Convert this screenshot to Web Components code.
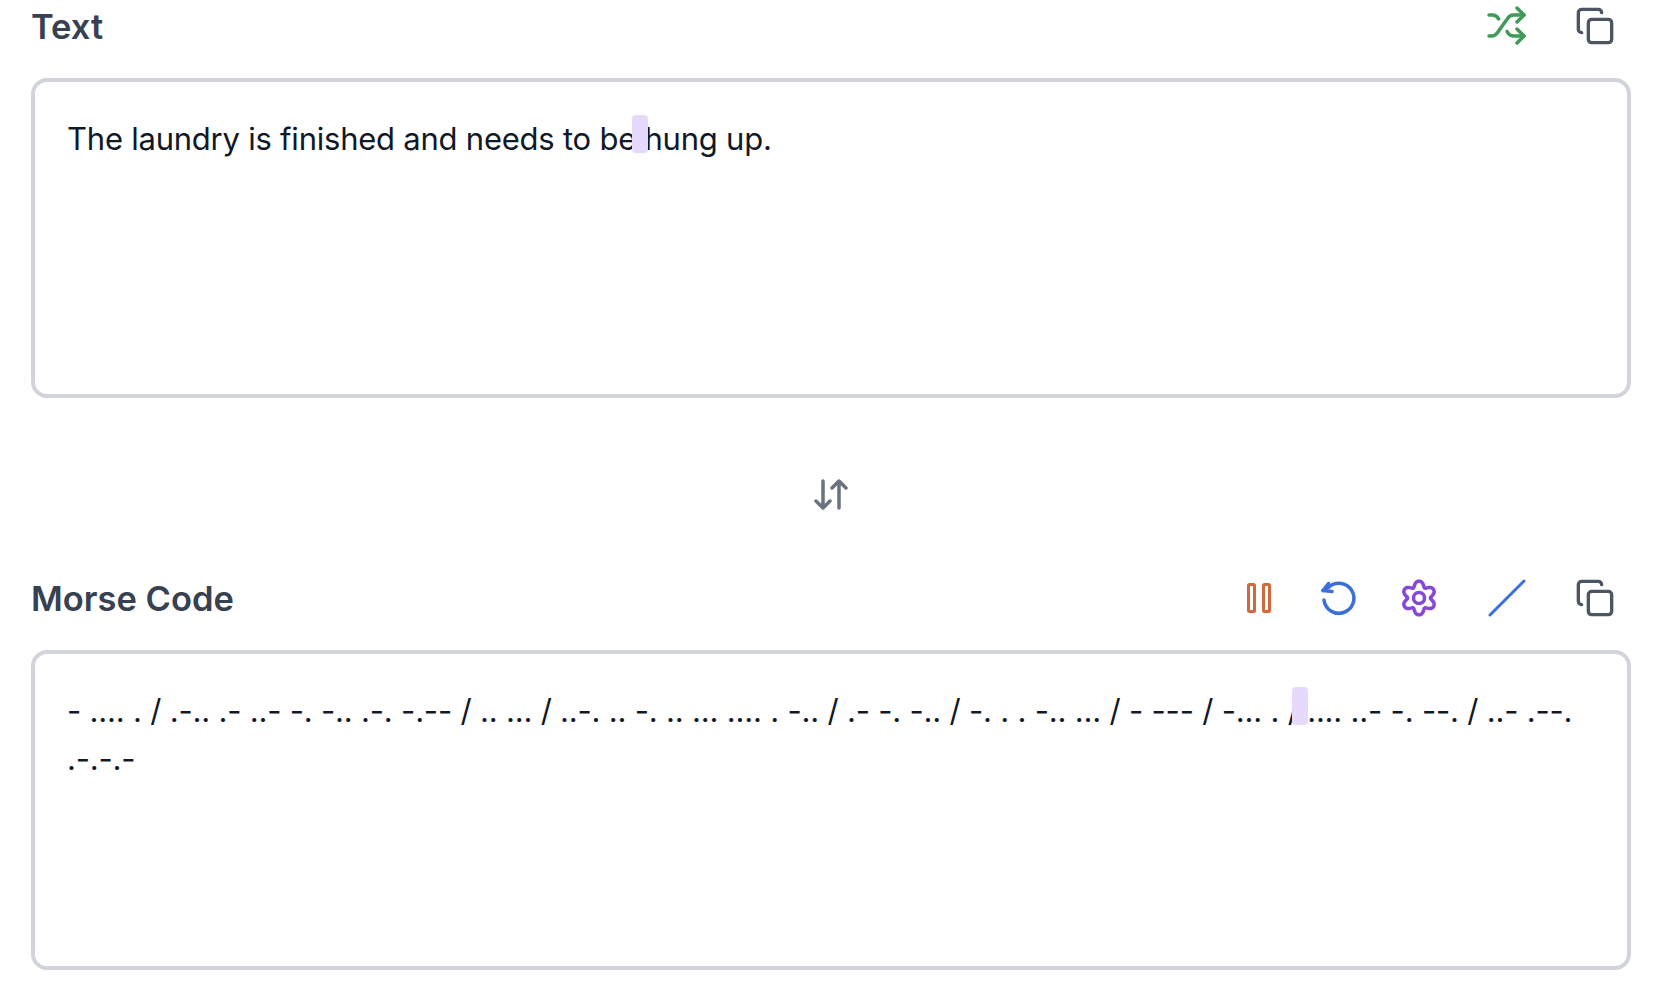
<!DOCTYPE html>
<html>
<head>
<meta charset="utf-8">
<style>
  html, body { margin: 0; background: #fff; }
  body { font-family: Inter, "Liberation Sans", sans-serif; overflow: hidden; }
</style>
</head>
<body>
<translator-page>
  <code-panel label="Text">
    <tool-icon slot="tools" name="shuffle" color="#3f9b57"></tool-icon>
    <tool-icon slot="tools" name="copy" color="#4b5563" wide></tool-icon>
    The laundry is finished and needs to be<cursor-mark></cursor-mark> hung up.
  </code-panel>
  <swap-divider></swap-divider>
  <code-panel label="Morse Code" style="--track: -0.205px; --cursor-left: -7px">
    <tool-icon slot="tools" name="pause" color="#d2693a"></tool-icon>
    <tool-icon slot="tools" name="rotate" color="#3b6fd9"></tool-icon>
    <tool-icon slot="tools" name="gear" color="#8747d8"></tool-icon>
    <tool-icon slot="tools" name="slash" color="#3b6fd9" wide></tool-icon>
    <tool-icon slot="tools" name="copy" color="#4b5563" wide></tool-icon>
    - .... . / .-.. .- ..- -. -.. .-. -.-- / .. ... / ..-. .. -. .. ... .... . -.. / .- -. -.. / -. . . -.. ... / - --- / -... . /<cursor-mark></cursor-mark> .... ..- -. --. / ..- .--. .-.-.-
  </code-panel>
</translator-page>

<script>
  // six lobed gear outline, centre line of the stroke
  function gearPath() {
    let d = '';
    for (let i = 0; i <= 120; i++) {
      const a = i / 120 * Math.PI * 2;
      const r = 14.5 + 2.7 * Math.cos(6 * a) - 0.4 * Math.cos(12 * a);
      const x = 24 + r * Math.sin(a);
      const y = 24 - r * Math.cos(a);
      d += (i ? 'L' : 'M') + x.toFixed(2) + ' ' + y.toFixed(2);
    }
    return d + 'Z';
  }

  const ICONS = {
    shuffle: '<g transform="translate(2.500 2.500) scale(1.75)"><path d="M2 18h1.400c1.300 0 2.500-.6 3.300-1.700l6.100-8.600c.7-1.100 2-1.700 3.300-1.700H22"/><path d="m18 2 4 4-4 4"/><path d="M2 6h1.900c1.500 0 2.900.9 3.600 2.200"/><path d="M22 18h-5.900c-1.300 0-2.600-.7-3.300-1.800l-.5-.8"/><path d="m18 14 4 4-4 4"/></g>',
    copy: '<g transform="translate(4 4) scale(1.667)"><rect x="8" y="8" width="14" height="14" rx="2"/><path d="M4 16c-1.100 0-2-.9-2-2V4c0-1.100.9-2 2-2h10c1.100 0 2 .9 2 2"/></g>',
    pause: '<rect x="13.500" y="10.500" width="6" height="27" rx="1"/><rect x="28.500" y="10.500" width="6" height="27" rx="1"/>',
    rotate: '<path d="M9 26a15 15 0 1 0 5-13L8 16.500"/><path d="M13.500 9.500L8 16.500l9 1"/>',
    gear: '<path d="' + gearPath() + '"/><circle cx="24" cy="24" r="5.500"/>',
    slash: '<path d="M7 41L41 7"/>',
    swap: '<path d="M16 11v27M9 31l7 7 7-7M32 38V11M25 18l7-7 7 7"/>'
  };

  class ToolIcon extends HTMLElement {
    connectedCallback() {
      const name = this.getAttribute('name');
      this.attachShadow({ mode: 'open' });
      this.shadowRoot.innerHTML = `
        <style>
          :host {
            display: block;
            width: 48px;
            height: 48px;
            color: ${this.getAttribute('color') || '#6b7280'};
          }
          :host([wide]) { margin-left: 8px; }
          svg { display: block; }
        </style>
        <svg width="48" height="48" viewBox="0 0 48 48" fill="none" stroke="currentColor"
          stroke-width="${name === 'shuffle' || name === 'copy' ? 2 : name === 'gear' || name === 'rotate' ? 3.5 : 3}" stroke-linecap="round" stroke-linejoin="round">${ICONS[name]}</svg>
      `;
    }
  }
  customElements.define('tool-icon', ToolIcon);

  class CursorMark extends HTMLElement {
    connectedCallback() {
      this.attachShadow({ mode: 'open' });
      this.shadowRoot.innerHTML = `
        <style>
          :host {
            position: relative;
            display: inline-block;
            width: 0;
            height: 0;
          }
          div {
            position: absolute;
            left: var(--cursor-left, -4px);
            top: -35px;
            width: 16px;
            height: 38px;
            border-radius: 4px;
            background: #e6d9fc;
          }
        </style>
        <div></div>
      `;
    }
  }
  customElements.define('cursor-mark', CursorMark);

  class CodePanel extends HTMLElement {
    connectedCallback() {
      this.attachShadow({ mode: 'open' });
      this.shadowRoot.innerHTML = `
        <style>
          :host { display: block; }
          header {
            display: flex;
            justify-content: space-between;
            align-items: center;
            height: 52px;
            margin-bottom: 26px;
            padding-right: 12px;
          }
          h2 {
            margin: 0;
            font-size: 34.500px;
            font-weight: 600;
            color: #374151;
          }
          .tools {
            display: flex;
            gap: 32px;
          }
          .box {
            box-sizing: border-box;
            height: 320px;
            border: 4px solid #d1d5db;
            border-radius: 16px;
            padding: 33px 32px 32px;
            font-size: 31px;
            letter-spacing: var(--track, -0.23px);
            line-height: 48px;
            color: #111827;
          }
        </style>
        <header>
          <h2>${this.getAttribute('label')}</h2>
          <div class="tools"><slot name="tools"></slot></div>
        </header>
        <div class="box"><slot></slot></div>
      `;
    }
  }
  customElements.define('code-panel', CodePanel);

  class SwapDivider extends HTMLElement {
    connectedCallback() {
      this.attachShadow({ mode: 'open' });
      this.shadowRoot.innerHTML = `
        <style>
          :host {
            box-sizing: border-box;
            display: flex;
            justify-content: center;
            align-items: center;
            height: 174px;
            padding-top: 18px;
            color: #6b7280;
          }
          svg { display: block; }
        </style>
        <svg width="48" height="48" viewBox="0 0 48 48" fill="none" stroke="currentColor"
          stroke-width="3.500" stroke-linecap="round" stroke-linejoin="round">${ICONS.swap}</svg>
      `;
    }
  }
  customElements.define('swap-divider', SwapDivider);

  class TranslatorPage extends HTMLElement {
    connectedCallback() {
      this.attachShadow({ mode: 'open' });
      this.shadowRoot.innerHTML = `
        <style>
          :host {
            display: block;
            padding: 0 31px;
          }
        </style>
        <slot></slot>
      `;
    }
  }
  customElements.define('translator-page', TranslatorPage);
</script>
</body>
</html>
